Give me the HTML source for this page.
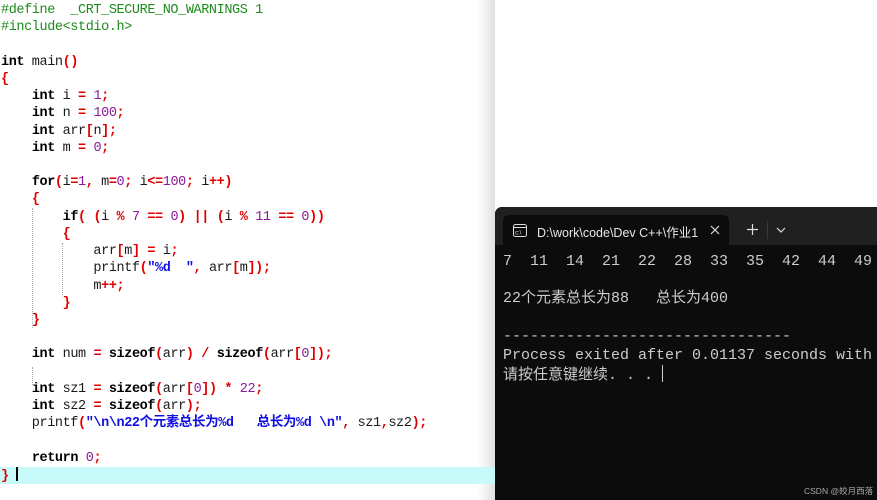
<!DOCTYPE html>
<html><head><meta charset="utf-8">
<style>
html,body{margin:0;padding:0;}
body{width:877px;height:500px;overflow:hidden;background:#fff;position:relative;font-family:"Liberation Mono","Noto Sans CJK SC",monospace;}
#code{position:absolute;left:1px;top:2px;font-size:13.5px;letter-spacing:-0.4px;line-height:17.22px;white-space:pre;color:#1a1a1a;}
.k{font-weight:bold;color:#000}
.s{color:#e00000;font-weight:bold}
.n{color:#8a1a9a}
.p{color:#1e8a1e}
.q{color:#1010e0;font-weight:bold}
.hl{position:absolute;left:0;top:467px;width:495px;height:17px;background:#c8fafa;}
.g{position:absolute;width:0;border-left:1px dotted #aaa;}
#term{position:absolute;left:495px;top:207px;width:382px;height:293px;background:#0c0c0c;border-radius:7px 0 0 0;overflow:hidden;}
#bar{position:absolute;left:0;top:0;width:382px;height:38px;background:#202020;}
#tab{position:absolute;left:8px;top:8px;width:226px;height:31px;background:#0c0c0c;border-radius:6px 6px 0 0;}
#tab .t{position:absolute;left:34px;top:7px;font-family:"Liberation Sans","Noto Sans CJK SC",sans-serif;font-size:12.5px;color:#e8e8e8;white-space:nowrap;}
#out{position:absolute;left:8px;top:46px;font-size:15px;line-height:18.7px;color:#cccccc;white-space:pre;}
.sh{position:absolute;left:478px;top:0;width:17px;height:500px;background:linear-gradient(to right,rgba(0,0,0,0),rgba(0,0,0,0.12));}
.wm{position:absolute;left:804px;top:485px;font-family:"Liberation Sans","Noto Sans CJK SC",sans-serif;font-size:8.5px;color:#aaa;}
</style></head><body>
<div class="sh"></div>
<div class="hl"></div>
<div class="g" style="left:32px;top:208px;height:120px"></div>
<div class="g" style="left:32px;top:367px;height:18px"></div>
<div class="g" style="left:62px;top:243px;height:52px"></div>
<div id="code"><span class="p">#define  _CRT_SECURE_NO_WARNINGS 1</span>
<span class="p">#include&lt;stdio.h&gt;</span>

<span class="k">int</span> main<span class="s">()</span>
<span class="s">{</span>
    <span class="k">int</span> i <span class="s">=</span> <span class="n">1</span><span class="s">;</span>
    <span class="k">int</span> n <span class="s">=</span> <span class="n">100</span><span class="s">;</span>
    <span class="k">int</span> arr<span class="s">[</span>n<span class="s">];</span>
    <span class="k">int</span> m <span class="s">=</span> <span class="n">0</span><span class="s">;</span>

    <span class="k">for</span><span class="s">(</span>i<span class="s">=</span><span class="n">1</span><span class="s">,</span> m<span class="s">=</span><span class="n">0</span><span class="s">;</span> i<span class="s">&lt;=</span><span class="n">100</span><span class="s">;</span> i<span class="s">++)</span>
    <span class="s">{</span>
        <span class="k">if</span><span class="s">(</span> <span class="s">(</span>i <span class="s">%</span> <span class="n">7</span> <span class="s">==</span> <span class="n">0</span><span class="s">)</span> <span class="s">||</span> <span class="s">(</span>i <span class="s">%</span> <span class="n">11</span> <span class="s">==</span> <span class="n">0</span><span class="s">))</span>
        <span class="s">{</span>
            arr<span class="s">[</span>m<span class="s">]</span> <span class="s">=</span> i<span class="s">;</span>
            printf<span class="s">(</span><span class="q">"%d  "</span><span class="s">,</span> arr<span class="s">[</span>m<span class="s">]);</span>
            m<span class="s">++;</span>
        <span class="s">}</span>
    <span class="s">}</span>

    <span class="k">int</span> num <span class="s">=</span> <span class="k">sizeof</span><span class="s">(</span>arr<span class="s">)</span> <span class="s">/</span> <span class="k">sizeof</span><span class="s">(</span>arr<span class="s">[</span><span class="n">0</span><span class="s">]);</span>

    <span class="k">int</span> sz1 <span class="s">=</span> <span class="k">sizeof</span><span class="s">(</span>arr<span class="s">[</span><span class="n">0</span><span class="s">])</span> <span class="s">*</span> <span class="n">22</span><span class="s">;</span>
    <span class="k">int</span> sz2 <span class="s">=</span> <span class="k">sizeof</span><span class="s">(</span>arr<span class="s">);</span>
    printf<span class="s">(</span><span class="q">"\n\n22个元素总长为%d   总长为%d \n"</span><span class="s">,</span> sz1<span class="s">,</span>sz2<span class="s">);</span>

    <span class="k">return</span> <span class="n">0</span><span class="s">;</span>
<span class="s">}</span> <span style="display:inline-block;width:2px;height:14px;background:#000;vertical-align:-2px"></span></div>

<div id="term">
  <div id="bar"></div>
  <div id="tab">
    <svg style="position:absolute;left:10px;top:9px" width="14" height="13" viewBox="0 0 14 13"><rect x="0.5" y="0.5" width="13" height="12" rx="2" fill="none" stroke="#ddd"/><line x1="0.5" y1="3.5" x2="13.5" y2="3.5" stroke="#ddd"/><text x="2" y="10.5" font-size="6" fill="#ddd" font-family="Liberation Sans">c:\</text></svg>
    <div class="t">D:\work\code\Dev C++\作业1</div>
    <svg style="position:absolute;left:207px;top:10px" width="10" height="10"><path d="M1 1L9 9M9 1L1 9" stroke="#ddd" stroke-width="1.2"/></svg>
  </div>
  <svg style="position:absolute;left:252px;top:17px" width="11" height="11"><path d="M5.5 0V11M0 5.5H11" stroke="#ddd" stroke-width="1.2"/></svg>
  <div style="position:absolute;left:272px;top:14px;width:1px;height:18px;background:#3a3a3a"></div>
  <svg style="position:absolute;left:281px;top:20px" width="10" height="6"><path d="M1 1L5 5L9 1" stroke="#ddd" stroke-width="1.2" fill="none"/></svg>
  <div id="out">7  11  14  21  22  28  33  35  42  44  49

22个元素总长为88   总长为400

--------------------------------
Process exited after 0.01137 seconds with
请按任意键继续. . . <span style="display:inline-block;width:1px;height:17px;background:#ccc;vertical-align:-3px"></span></div>
</div>
<div class="wm">CSDN @皎月西落</div>
</body></html>
